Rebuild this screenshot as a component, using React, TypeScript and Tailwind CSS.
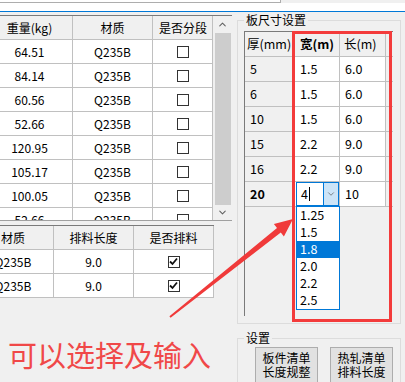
import { ChevronDown, ChevronUp } from "lucide-react";

const weights = ["64.51", "84.14", "60.56", "52.66", "120.95", "105.17", "100.05", "52.66"];
const plates = [
  ["5", "1.5", "6.0"],
  ["6", "1.5", "6.0"],
  ["10", "1.5", "6.0"],
  ["15", "2.2", "9.0"],
  ["16", "2.2", "9.0"],
];
const options = ["1.25", "1.5", "1.8", "2.0", "2.2", "2.5"];

function Box({ checked }: { checked?: boolean }) {
  return (
    <span className="w-[12px] h-[12px] border border-[#333] bg-white flex items-center justify-center">
      {checked && (
        <svg width="9" height="9" viewBox="0 0 9 9">
          <path d="M1 4.5 L3.5 7 L8 1.5" fill="none" stroke="#111" strokeWidth="1.8" />
        </svg>
      )}
    </span>
  );
}

export default function App() {
  return (
    <div className="w-[405px] h-[382px] overflow-hidden relative bg-[#f0f0f0] text-[12px] text-black font-['Noto_Sans_CJK_SC',sans-serif]">
      {/* top strip */}
      <div className="h-[3px] flex">
        <div className="w-[281px] border-b border-r border-[#adadad] bg-white" />
      </div>
      <div className="h-[8px] bg-white" />
      <div className="h-px bg-[#0078d7]" />

      <div className="flex">
        {/* left side */}
        <div className="w-[232px] pt-[3px] overflow-hidden">
          <div className="h-[206px] flex border-t border-b border-t-[#7a7a7a] border-b-[#a0a0a0] bg-white">
            <div className="w-[213px] overflow-hidden border-r border-[#c0c0c0]">
              <div className="flex h-[24px] bg-[#f0f0f0] border-b border-[#c0c0c0]">
                <div className="w-[86px] -ml-[13px] shrink-0 border-r border-[#c0c0c0] flex items-center justify-center">重量(kg)</div>
                <div className="w-[80px] shrink-0 border-r border-[#c0c0c0] flex items-center justify-center">材质</div>
                <div className="w-[60px] shrink-0 flex items-center justify-center">是否分段</div>
              </div>
              {weights.map((w, i) => (
                <div key={i} className="flex h-[24px] border-b border-[#c0c0c0]">
                  <div className="w-[86px] -ml-[13px] shrink-0 border-r border-[#c0c0c0] flex items-center justify-center">{w}</div>
                  <div className="w-[80px] shrink-0 border-r border-[#c0c0c0] flex items-center justify-center">Q235B</div>
                  <div className="w-[60px] shrink-0 flex items-center justify-center">
                    <Box />
                  </div>
                </div>
              ))}
            </div>
            <div className="w-[19px] bg-[#f0f0f0] flex flex-col items-center">
              <div className="h-[17px] flex items-center justify-center">
                <ChevronUp size={11} strokeWidth={2.2} color="#606060" />
              </div>
              <div className="w-[16px] h-[172px] bg-[#cdcdcd]" />
              <div className="flex-1 flex items-center justify-center">
                <ChevronDown size={11} strokeWidth={2.2} color="#606060" />
              </div>
            </div>
          </div>

          <div className="mt-[4px] w-[214px] overflow-hidden border-t border-t-[#7a7a7a] bg-white">
            <div className="flex h-[24px] bg-[#f0f0f0] border-b border-[#c0c0c0]">
              <div className="w-[81px] -ml-[27px] shrink-0 border-r border-[#c0c0c0] flex items-center justify-center">材质</div>
              <div className="w-[80px] shrink-0 border-r border-[#c0c0c0] flex items-center justify-center">排料长度</div>
              <div className="w-[80px] shrink-0 border-r border-[#c0c0c0] flex items-center justify-center">是否排料</div>
            </div>
            {[0, 1].map((i) => (
              <div key={i} className="flex h-[24px] border-b border-[#c0c0c0]">
                <div className="w-[81px] -ml-[27px] shrink-0 border-r border-[#c0c0c0] flex items-center justify-center">Q235B</div>
                <div className="w-[80px] shrink-0 border-r border-[#c0c0c0] flex items-center justify-center">9.0</div>
                <div className="w-[80px] shrink-0 border-r border-[#c0c0c0] flex items-center justify-center">
                  <Box checked />
                </div>
              </div>
            ))}
          </div>

          <div className="mt-[42px] ml-[8px] text-[29px] leading-none text-[#f04848] whitespace-nowrap">可以选择及输入</div>
        </div>

        {/* right side */}
        <div className="flex-1 pl-[5px] pr-[4px]">
          <div className="relative mt-[8px] h-[304px] border border-[#dcdcdc] pl-[6px] pt-[10px]">
            <span className="absolute -top-[9px] left-[6px] px-[2px] bg-[#f0f0f0] leading-[16px]">板尺寸设置</span>
            <div className="relative w-[149px] h-[285px] border-l border-t border-[#7a7a7a] bg-[#f0f0f0] text-[12.5px] whitespace-nowrap">
              <div className="flex h-[25px] border-b border-[#c0c0c0]">
                <div className="w-[49px] pl-[2px] border-r border-[#c0c0c0] flex items-center overflow-hidden">厚(mm)</div>
                <div className="w-[46px] pl-[6px] border-r border-[#c0c0c0] flex items-center font-bold">宽(m)</div>
                <div className="w-[46px] pl-[4px] border-r border-[#c0c0c0] flex items-center">长(m)</div>
              </div>
              {plates.map((p) => (
                <div key={p[0]} className="flex h-[25px] border-b border-[#c0c0c0]">
                  <div className="w-[49px] pl-[5px] border-r border-[#c0c0c0] flex items-center">{p[0]}</div>
                  <div className="w-[46px] pl-[6px] border-r border-[#c0c0c0] bg-white flex items-center">{p[1]}</div>
                  <div className="w-[46px] pl-[5px] border-r border-[#c0c0c0] bg-white flex items-center">{p[2]}</div>
                </div>
              ))}
              <div className="flex h-[25px] border-b border-[#c0c0c0]">
                <div className="w-[49px] pl-[5px] border-r border-[#c0c0c0] flex items-center font-bold">20</div>
                <div className="relative w-[46px] border-r border-[#c0c0c0] bg-white">
                  <div className="absolute left-[2px] right-0 top-0 bottom-0 border border-[#0078d7] flex">
                    <div className="flex-1 pl-[4px] flex items-center">
                      4<span className="w-px h-[14px] bg-black ml-px" />
                    </div>
                    <div className="w-[15px] bg-[#cce4f7] border-l border-[#0078d7] flex items-center justify-center">
                      <ChevronDown size={10} strokeWidth={1.6} color="#505050" />
                    </div>
                  </div>
                  <div className="absolute left-[2px] top-[24px] w-[44px] h-[104px] border border-[#0078d7] bg-white z-10">
                    {options.map((o) => (
                      <div
                        key={o}
                        className={
                          o === "1.8"
                            ? "h-[17px] pl-[3px] flex items-center bg-[#0078d7] text-white"
                            : "h-[17px] pl-[3px] flex items-center"
                        }
                      >
                        {o}
                      </div>
                    ))}
                  </div>
                </div>
                <div className="w-[46px] pl-[5px] border-r border-[#c0c0c0] bg-white flex items-center">10</div>
              </div>
            </div>
          </div>

          <div className="relative mt-[14px] h-[60px] border border-[#dcdcdc] pl-[17px] pt-[8px] flex gap-[12px]">
            <span className="absolute -top-[9px] left-[6px] px-[2px] bg-[#f0f0f0] leading-[16px]">设置</span>
            <button className="w-[63px] h-[36px] bg-[#e1e1e1] border border-[#adadad] leading-[14px] text-center">
              板件清单
              <br />
              长度规整
            </button>
            <button className="w-[63px] h-[36px] bg-[#e1e1e1] border border-[#adadad] leading-[14px] text-center">
              热轧清单
              <br />
              排料长度
            </button>
          </div>
        </div>
      </div>

      {/* annotations */}
      <div className="absolute left-[292px] top-[31px] w-[100px] h-[291px] border-[3px] border-[#f33b3b] pointer-events-none z-20" />
      <svg className="absolute left-0 top-0 pointer-events-none z-20" width="405" height="382">
        <polygon
          points="169.4,316.2 277,227.9 273.9,223.9 293,219 283.9,236.5 280.8,232.5 170.6,317.8"
          fill="#f03a3a"
        />
      </svg>
    </div>
  );
}
